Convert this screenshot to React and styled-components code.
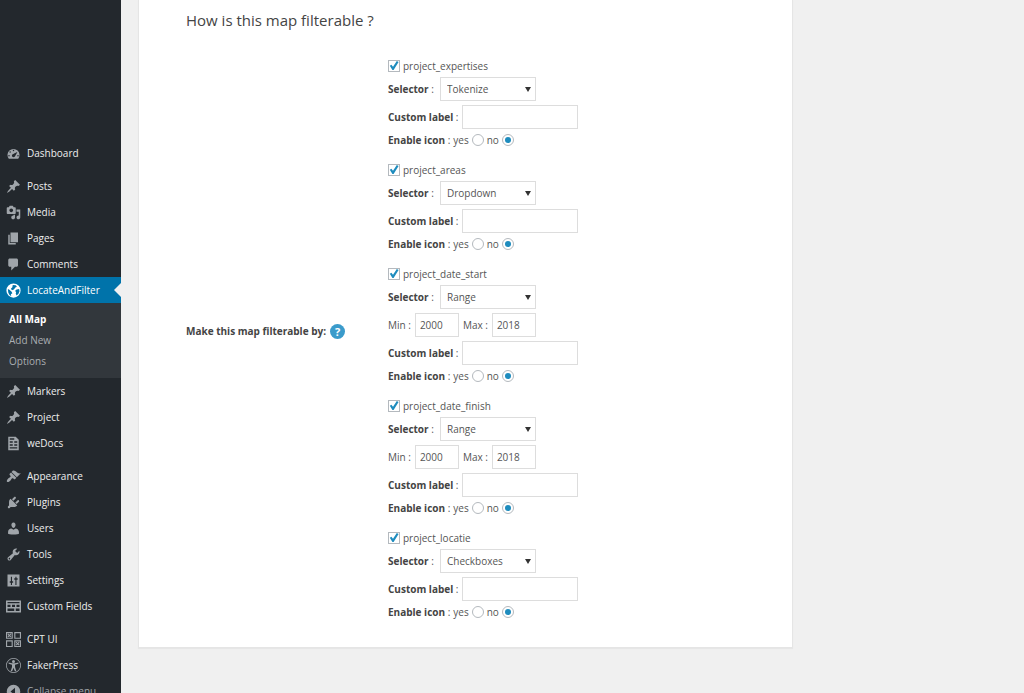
import { useState } from "react";
import styled, { createGlobalStyle } from "styled-components";

const GlobalStyle = createGlobalStyle`
  * {
    box-sizing: border-box;
  }
  body {
    margin: 0;
    background: #f0f0f0;
    color: #555;
    font-family: "Open Sans", "Noto Sans", sans-serif;
    font-size: 10px;
  }
  input, select, button {
    font-family: inherit;
    font-size: 10px;
    color: #555;
  }
`;

const Layout = styled.div`
  display: flex;
  height: 100vh;
  overflow: hidden;
`;

/* ---------- admin menu ---------- */

const Sidebar = styled.nav`
  flex: 0 0 121px;
  padding-top: 140px;
  background: #23282d;
`;

const MenuList = styled.ul`
  list-style: none;
  margin: 0 0 7px;
  padding: 0;
`;

const MenuLink = styled.a`
  position: relative;
  display: flex;
  align-items: center;
  gap: 6px;
  height: 26px;
  padding-left: 6px;
  white-space: nowrap;
  text-decoration: none;
  color: ${(props) => (props.$active ? "#fff" : "#eee")};
  background: ${(props) => (props.$active ? "#0073aa" : "transparent")};

  &::after {
    content: "";
    display: ${(props) => (props.$active ? "block" : "none")};
    position: absolute;
    right: 0;
    border: 7px solid transparent;
    border-left-width: 0;
    border-right-color: #f0f0f0;
  }
`;

const MenuIcon = styled.svg`
  flex: none;
  width: 15px;
  height: 15px;
  fill: ${(props) => (props.$active ? "#fff" : "#a0a5aa")};
`;

const SubMenu = styled.ul`
  list-style: none;
  margin: 0;
  padding: 6px 0;
  background: #32373c;
`;

const SubLink = styled.a`
  display: block;
  padding-left: 9px;
  line-height: 21px;
  text-decoration: none;
  color: ${(props) => (props.$current ? "#fff" : "#a9adb1")};
  font-weight: ${(props) => (props.$current ? 700 : 400)};
`;

const CollapseButton = styled.button`
  display: flex;
  align-items: center;
  gap: 6px;
  height: 26px;
  padding: 0 0 0 6px;
  border: 0;
  background: none;
  color: #a0a5aa;
  white-space: nowrap;
`;

/* ---------- content ---------- */

const Content = styled.main`
  flex: 1;
  min-width: 0;
  padding: 0 231px 0 17px;
`;

const Card = styled.section`
  padding: 9px 47px 27px;
  background: #fff;
  border: 1px solid #e5e5e5;
  border-top: 0;
  box-shadow: 0 1px 1px rgba(0, 0, 0, 0.04);
`;

const Title = styled.h2`
  margin: 0 0 25px;
  font-size: 15px;
  font-weight: 400;
  line-height: 22px;
  color: #444;
`;

const FilterForm = styled.form`
  display: grid;
  grid-template-columns: 202px 1fr;
  align-items: center;
`;

const FormLabel = styled.div`
  display: flex;
  align-items: center;
  gap: 4px;
  padding-bottom: 14px;
  font-weight: 700;
  color: #444;
`;

const HelpButton = styled.button`
  width: 15px;
  height: 15px;
  padding: 0;
  border: 0;
  border-radius: 50%;
  background: #3a9bcb;
  color: #fff;
  font-size: 11px;
  font-weight: 700;
  line-height: 15px;
`;

const FilterList = styled.div`
  display: flex;
  flex-direction: column;
  gap: 12px;
`;

const FilterGroup = styled.fieldset`
  min-width: 0;
  margin: 0;
  padding: 0;
  border: 0;
`;

const Row = styled.div`
  display: flex;
  align-items: center;
  gap: ${(props) => props.$gap || 4}px;
  height: ${(props) => props.$height || 28}px;
`;

const Checkbox = styled.input`
  appearance: none;
  width: 12px;
  height: 12px;
  margin: 0;
  border: 1px solid #b4b9be;
  background: #fff;

  &:checked::before {
    content: "";
    display: block;
    width: 10px;
    height: 10px;
    background: #1e8cbe;
    clip-path: polygon(8% 52%, 24% 42%, 40% 62%, 78% 6%, 96% 14%, 46% 96%, 34% 96%);
  }
`;

const Radio = styled.input`
  appearance: none;
  display: grid;
  place-items: center;
  width: 12px;
  height: 12px;
  margin: 0;
  border: 1px solid #b4b9be;
  border-radius: 50%;
  background: #fff;

  &:checked::before {
    content: "";
    width: 6px;
    height: 6px;
    border-radius: 50%;
    background: #1e8cbe;
  }
`;

const SelectWrap = styled.span`
  position: relative;
  display: flex;
  align-items: center;

  &::after {
    content: "";
    position: absolute;
    right: 5px;
    border: 3px solid transparent;
    border-top: 5px solid #333;
    border-bottom: 0;
    pointer-events: none;
  }
`;

const Select = styled.select`
  appearance: none;
  width: 96px;
  height: 24px;
  padding: 0 6px;
  border: 1px solid #ddd;
  border-radius: 0;
  background: #fff;
`;

const TextInput = styled.input`
  width: ${(props) => (props.$small ? 44 : 116)}px;
  height: 24px;
  padding: 0 4px;
  border: 1px solid #ddd;
  background: #fff;
`;

const LabelText = styled.label`
  min-width: ${(props) => props.$width || 0}px;
  white-space: nowrap;

  b {
    font-weight: 700;
    color: #444;
  }
`;

const icons = {
  dashboard:
    "M3.76 17h12.48A8 8 0 1 0 3.76 17zM10 5a1 1 0 1 1 0 2 1 1 0 0 1 0-2zM5.500 7a1 1 0 1 1 0 2 1 1 0 0 1 0-2zM4 12a1 1 0 1 1 0 2 1 1 0 0 1 0-2zm12 0a1 1 0 1 1 0 2 1 1 0 0 1 0-2zM8.52 11.4c.84-.83 6.51-3.5 6.51-3.5s-2.66 5.68-3.49 6.51c-.84.84-2.18.84-3.02 0-.83-.83-.83-2.18 0-3.01z",
  pin: "M10.44 3.02l1.82-1.82 6.36 6.35-1.83 1.82c-1.05-.68-2.48-.57-3.41.36l-.75.75c-.92.93-1.04 2.35-.35 3.41l-1.83 1.82-2.41-2.41-2.8 2.79c-.42.42-3.38 2.71-3.8 2.29s1.86-3.39 2.28-3.81l2.79-2.79L4.1 9.36l1.83-1.82c1.05.69 2.48.57 3.4-.36l.75-.75c.93-.92 1.05-2.35.36-3.41z",
  media:
    "M13 11V4c0-.55-.45-1-1-1h-1.67L9 1H5L3.67 3H2c-.55 0-1 .45-1 1v7c0 .55.45 1 1 1h10c.55 0 1-.45 1-1zM7 4.5c1.38 0 2.5 1.12 2.5 2.5S8.38 9.5 7 9.5 4.5 8.38 4.5 7 5.62 4.5 7 4.5zM14 6h5v10.5c0 1.38-1.12 2.5-2.5 2.5S14 17.88 14 16.5s1.12-2.5 2.5-2.5c.17 0 .34.02.5.05V9h-3V6zm-4 8.05V13h2v3.5c0 1.38-1.12 2.5-2.5 2.5S7 17.88 7 16.5 8.12 14 9.5 14c.17 0 .34.02.5.05z",
  pages: "M6 15V2h10v13H6zm-1 1h8v2H3V5h2v11z",
  comments:
    "M5 2h9c1.1 0 2 .9 2 2v7c0 1.1-.9 2-2 2h-2l-5 5v-5H5c-1.1 0-2-.9-2-2V4c0-1.1.9-2 2-2z",
  globe:
    "M10 .5a9.500 9.500 0 1 0 0 19 9.500 9.500 0 0 0 0-19zM9 2.500l4 .5 1.500 2-2 1-2 2.500-2.500 1-1.500-2 2-2zM2.500 8l2 1 3 2.500 1 2-2 1.500.5 2.500-2.500-2-1.500-3zM14 8.500l3.500-.5.5 3-1.500 3.500-2.500 2-1-2.500.5-2-1.500-1.500z",
  docs: "M3 1h10l4 4v14H3V1zm2 2v2h6V3H5zm0 4v2h4V7H5zm6 0v2h4V7h-4zm-6 4v2h4v-2H5zm6 0v2h4v-2h-4zm-6 4v1.500h10V15H5z",
  appearance:
    "M14.48 11.06L7.41 3.99l1.5-1.5c.5-.56 2.3-.47 3.51.32 1.21.8 1.43 1.28 2.91 2.1 1.18.64 2.45 1.26 4.45.85zm-.71.71L6.7 4.7 4.93 6.47c-.39.39-.39 1.02 0 1.41l1.06 1.06c.39.39.39 1.03 0 1.42-.6.6-1.43 1.11-2.21 1.69-.35.26-.7.53-1.01.84C1.43 14.23.4 16.08 1.4 17.07c.99 1 2.84-.03 4.18-1.36.31-.31.58-.66.85-1.02.57-.78 1.08-1.61 1.69-2.21.39-.39 1.02-.39 1.41 0l1.06 1.06c.39.39 1.02.39 1.41 0z",
  plugins:
    "M13.11 4.36L9.87 7.6 8 5.73l3.24-3.24c.35-.34 1.05-.2 1.56.32.52.51.66 1.21.31 1.55zm-8 1.77l.91-1.12 9.01 9.01-1.19.84c-.71.71-2.63 1.16-3.82 1.16H6.14L4.9 17.26c-.59.59-1.54.59-2.12 0-.59-.58-.59-1.53 0-2.12l1.24-1.24v-3.88c0-1.13.4-3.19 1.09-3.89zm7.26 3.97l3.24-3.24c.34-.35 1.04-.21 1.55.31.52.51.66 1.21.31 1.55l-3.24 3.25z",
  users:
    "M10 9.25c-2.27 0-2.73-3.44-2.73-3.44C7 4.02 7.82 2 9.97 2c2.16 0 2.98 2.02 2.71 3.81 0 0-.41 3.44-2.68 3.44zm0 2.57L12.72 10c2.39 0 4.52 2.33 4.52 4.53v2.49s-3.65 1.13-7.24 1.13c-3.65 0-7.24-1.13-7.24-1.13v-2.49c0-2.25 1.94-4.48 4.47-4.48z",
  tools:
    "M16.68 9.77c-1.34 1.34-3.3 1.67-4.95.99l-5.41 6.52c-.99.99-2.59.99-3.58 0s-.99-2.59 0-3.57l6.52-5.42c-.68-1.65-.35-3.61.99-4.95 1.28-1.28 3.12-1.62 4.72-1.06l-2.89 2.89 2.82 2.82 2.86-2.87c.53 1.58.18 3.39-1.08 4.65zM3.81 16.21c.4.39 1.04.39 1.43 0 .4-.4.4-1.04 0-1.43-.39-.4-1.03-.4-1.43 0-.39.39-.39 1.03 0 1.43z",
  settings:
    "M2 2h16v16H2V2zm4.500 3v6H5v2h1.500v3h1.500v-3h1.500v-2H8V5H6.500zm6 0v2H11v2h1.500v7H14V9h1.500V7H14V5h-1.500z",
  fields:
    "M0 2h20v16H0V2zm2 2v1.500h16V4H2zm0 3.500v3h4v-3H2zm6 0v3h4v-3H8zm6 0v3h4v-3h-4zM2 12.500v3.500h9v-3.500H2zm11 0V16h5v-3.500h-5z",
  cpt: "M0 0h9v9H0V0zm1.500 1.500v6h6v-6h-6zM11 0h9v9h-9V0zm1.500 1.500v6h6v-6h-6zM0 11h9v9H0v-9zm1.500 1.500v6h6v-6h-6zM11 11h9v9h-9v-9zm1.500 1.500v6h6v-6h-6zM2 3l1-1 1.500 1.500L6 2l1 1-1.500 1.500L7 6 6 7 4.500 5.500 3 7 2 6l1.500-1.500zM13 14l1-1 1.500 1.500L17 13l1 1-1.500 1.500L18 17l-1 1-1.500-1.500L14 18l-1-1 1.500-1.500z",
  faker:
    "M10 0a10 10 0 1 0 0 20 10 10 0 0 0 0-20zm0 1a9 9 0 1 1 0 18 9 9 0 0 1 0-18zM10 2.500a2 2 0 1 0 0 4 2 2 0 0 0 0-4zM3.500 6v1.800L8 9v3l-1.800 5.500h2L10 13l1.800 4.500h2L12 12V9l4.500-1.200V6L12 7H8z",
  collapse: "M10 1a9 9 0 1 0 0 18 9 9 0 0 0 0-18zm2 4v10l-6-5z",
};

const menu = [
  [{ label: "Dashboard", icon: "dashboard" }],
  [
    { label: "Posts", icon: "pin" },
    { label: "Media", icon: "media" },
    { label: "Pages", icon: "pages" },
    { label: "Comments", icon: "comments" },
    {
      label: "LocateAndFilter",
      icon: "globe",
      children: ["All Map", "Add New", "Options"],
    },
    { label: "Markers", icon: "pin" },
    { label: "Project", icon: "pin" },
    { label: "weDocs", icon: "docs" },
  ],
  [
    { label: "Appearance", icon: "appearance" },
    { label: "Plugins", icon: "plugins" },
    { label: "Users", icon: "users" },
    { label: "Tools", icon: "tools" },
    { label: "Settings", icon: "settings" },
    { label: "Custom Fields", icon: "fields" },
  ],
];

const lastGroup = [
  { label: "CPT UI", icon: "cpt" },
  { label: "FakerPress", icon: "faker" },
];

const filters = [
  { name: "project_expertises", selector: "Tokenize" },
  { name: "project_areas", selector: "Dropdown" },
  { name: "project_date_start", selector: "Range", min: "2000", max: "2018" },
  { name: "project_date_finish", selector: "Range", min: "2000", max: "2018" },
  { name: "project_locatie", selector: "Checkboxes" },
];

const selectors = ["Tokenize", "Dropdown", "Range", "Checkboxes"];

const Icon = ({ name, active }) => (
  <MenuIcon viewBox="0 0 20 20" $active={active} aria-hidden="true">
    <path fillRule="evenodd" d={icons[name]} />
  </MenuIcon>
);

const MenuItem = ({ item }) => {
  const active = Boolean(item.children);
  return (
    <li>
      <MenuLink href="#" $active={active}>
        <Icon name={item.icon} active={active} />
        {item.label}
      </MenuLink>
      {active && (
        <SubMenu>
          {item.children.map((label, i) => (
            <li key={label}>
              <SubLink href="#" $current={i === 0}>
                {label}
              </SubLink>
            </li>
          ))}
        </SubMenu>
      )}
    </li>
  );
};

const Filter = ({ name, selector, min, max }) => {
  const [enabled, setEnabled] = useState(true);
  const [type, setType] = useState(selector);
  const [icon, setIcon] = useState("no");

  return (
    <FilterGroup aria-label={name}>
      <Row $height={19} $gap={3}>
        <Checkbox
          type="checkbox"
          id={name}
          checked={enabled}
          onChange={(e) => setEnabled(e.target.checked)}
        />
        <label htmlFor={name}>{name}</label>
      </Row>
      <Row>
        <LabelText htmlFor={`${name}-selector`} $width={48}>
          <b>Selector</b> :
        </LabelText>
        <SelectWrap>
          <Select
            id={`${name}-selector`}
            value={type}
            onChange={(e) => setType(e.target.value)}
          >
            {selectors.map((s) => (
              <option key={s}>{s}</option>
            ))}
          </Select>
        </SelectWrap>
      </Row>
      {min && (
        <Row>
          <LabelText htmlFor={`${name}-min`}>Min :</LabelText>
          <TextInput id={`${name}-min`} $small defaultValue={min} />
          <LabelText htmlFor={`${name}-max`}>Max :</LabelText>
          <TextInput id={`${name}-max`} $small defaultValue={max} />
        </Row>
      )}
      <Row>
        <LabelText htmlFor={`${name}-label`} $width={70}>
          <b>Custom label</b> :
        </LabelText>
        <TextInput type="text" id={`${name}-label`} />
      </Row>
      <Row $height={17} $gap={3}>
        <LabelText as="span">
          <b>Enable icon</b> :
        </LabelText>
        {["yes", "no"].map((value) => (
          <Row as="label" key={value} $height={17} $gap={3}>
            {value}
            <Radio
              type="radio"
              name={`${name}-icon`}
              checked={icon === value}
              onChange={() => setIcon(value)}
            />
          </Row>
        ))}
      </Row>
    </FilterGroup>
  );
};

export default function App() {
  return (
    <>
      <GlobalStyle />
      <Layout>
        <Sidebar>
          {menu.map((group) => (
            <MenuList key={group[0].label}>
              {group.map((item) => (
                <MenuItem key={item.label} item={item} />
              ))}
            </MenuList>
          ))}
          <MenuList>
            {lastGroup.map((item) => (
              <MenuItem key={item.label} item={item} />
            ))}
            <li>
              <CollapseButton type="button">
                <Icon name="collapse" />
                Collapse menu
              </CollapseButton>
            </li>
          </MenuList>
        </Sidebar>
        <Content>
          <Card>
            <Title>How is this map filterable ?</Title>
            <FilterForm>
              <FormLabel>
                Make this map filterable by:
                <HelpButton type="button">?</HelpButton>
              </FormLabel>
              <FilterList>
                {filters.map((filter) => (
                  <Filter key={filter.name} {...filter} />
                ))}
              </FilterList>
            </FilterForm>
          </Card>
        </Content>
      </Layout>
    </>
  );
}
